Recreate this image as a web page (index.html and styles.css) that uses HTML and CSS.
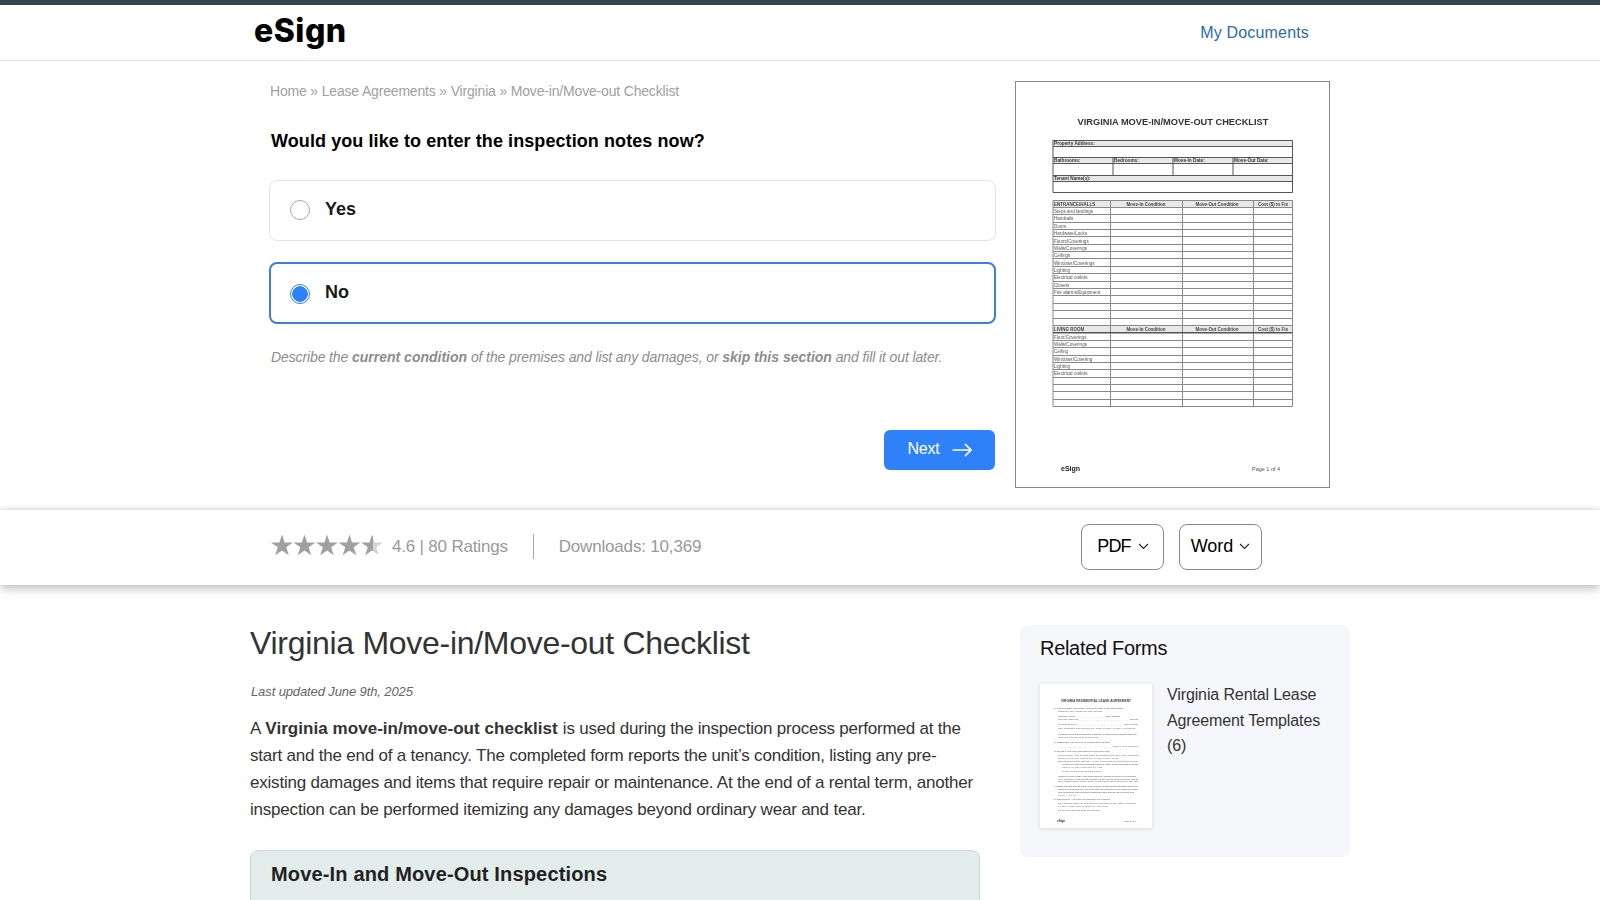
FILE: index.html
```html
<!DOCTYPE html>
<html lang="en">
<head>
<meta charset="utf-8">
<title>Virginia Move-in/Move-out Checklist</title>
<link rel="stylesheet" href="styles.css">
</head>
<body>
<div class="topbar"></div>
<header class="site-header">
  <div class="wrap header-row">
    <a class="logo">eSign</a>
    <a class="nav-link">My Documents</a>
  </div>
</header>
<section class="wizard wrap">
  <div class="wizard-form">
    <div class="crumbs">Home » Lease Agreements » Virginia » Move-in/Move-out Checklist</div>
    <h2 class="question">Would you like to enter the inspection notes now?</h2>
    <label class="option"><span class="radio"></span><span class="opt-label">Yes</span></label>
    <label class="option selected"><span class="radio on"></span><span class="opt-label">No</span></label>
    <p class="hint">Describe the <b>current condition</b> of the premises and list any damages, or <b>skip this section</b> and fill it out later.</p>
    <div class="next-row">
      <a class="next"><span class="next-text">Next</span>
        <svg class="arrow" width="20" height="14" viewBox="0 0 20 14"><path d="M0.5 7H19M13 1l6 6-6 6" fill="none" stroke="#fff" stroke-width="1.6"/></svg>
      </a>
    </div>
  </div>
  <div class="doc">
    <svg class="doc-svg" width="313" height="405" viewBox="1016 82 313 405">
      <g fill="#333" font-family="Liberation Sans, Arial, sans-serif">
        <text x="1173" y="125" text-anchor="middle" font-size="9.25" font-weight="700">VIRGINIA MOVE-IN/MOVE-OUT CHECKLIST</text>
        <path fill="#e8e8e8" d="M1053 140h240v6h-240zM1053 158h240v5.500h-240zM1053 175.500h240v5.500h-240zM1053 200h240v7.500h-240zM1053 325.500h240v7h-240z"/>
        <path fill="none" stroke="#555" stroke-width="1" d="M1053 140.500H1292.500V192.500H1053ZM1053 146.500H1292.500M1053 157.500H1292.500M1053 163.500H1292.500M1053 175.500H1292.500M1053 181.500H1292.500M1113 157.500V175.500M1173 157.500V175.500M1233 157.500V175.500"/>
        <path fill="none" stroke="#888" stroke-width="1" d="M1053 200.500H1292.500V406.500H1053ZM1110.500 200V406.500M1182.500 200V406.500M1253.500 200V406.500M1053 207.500H1292.500M1053 214.500H1292.500M1053 222.500H1292.500M1053 229.500H1292.500M1053 236.500H1292.500M1053 244.500H1292.500M1053 251.500H1292.500M1053 258.500H1292.500M1053 266.500H1292.500M1053 273.500H1292.500M1053 281.500H1292.500M1053 288.500H1292.500M1053 295.500H1292.500M1053 303.500H1292.500M1053 310.500H1292.500M1053 318.500H1292.500M1053 325.500H1292.500M1053 340.500H1292.500M1053 347.500H1292.500M1053 355.500H1292.500M1053 362.500H1292.500M1053 369.500H1292.500M1053 377.500H1292.500M1053 384.500H1292.500M1053 391.500H1292.500M1053 399.500H1292.500"/>
        <path fill="none" stroke="#555" stroke-width="1.500" d="M1053 332.800H1292.500"/>
        <g font-size="4.700" font-weight="700">
          <text x="1054" y="145">Property Address:</text>
          <text x="1054" y="162">Bathrooms:</text>
          <text x="1114" y="162">Bedrooms:</text>
          <text x="1174" y="162">Move-In Date:</text>
          <text x="1234" y="162">Move-Out Date:</text>
          <text x="1054" y="180">Tenant Name(s):</text>
        </g>
        <g font-size="4.500" font-weight="700" fill="#444">
          <text x="1054" y="206">ENTRANCE/HALLS</text>
          <text x="1146" y="206" text-anchor="middle">Move-In Condition</text>
          <text x="1217" y="206" text-anchor="middle">Move-Out Condition</text>
          <text x="1273" y="206" text-anchor="middle">Cost ($) to Fix</text>
          <text x="1054" y="331">LIVING ROOM</text>
          <text x="1146" y="331" text-anchor="middle">Move-In Condition</text>
          <text x="1217" y="331" text-anchor="middle">Move-Out Condition</text>
          <text x="1273" y="331" text-anchor="middle">Cost ($) to Fix</text>
        </g>
        <g font-size="4.600" fill="#555">
          <text x="1054" y="213">Steps and landings</text>
          <text x="1054" y="220">Handrails</text>
          <text x="1054" y="228">Doors</text>
          <text x="1054" y="235">Hardware/Locks</text>
          <text x="1054" y="243">Floors/Coverings</text>
          <text x="1054" y="250">Walls/Coverings</text>
          <text x="1054" y="257">Ceilings</text>
          <text x="1054" y="265">Windows/Coverings</text>
          <text x="1054" y="272">Lighting</text>
          <text x="1054" y="279">Electrical outlets</text>
          <text x="1054" y="287">Closets</text>
          <text x="1054" y="294">Fire alarms/Equipment</text>
          <text x="1054" y="339">Floor/Coverings</text>
          <text x="1054" y="346">Walls/Coverings</text>
          <text x="1054" y="353">Ceiling</text>
          <text x="1054" y="361">Windows/Covering</text>
          <text x="1054" y="368">Lighting</text>
          <text x="1054" y="375">Electrical outlets</text>
        </g>
        <text x="1061" y="471" font-size="7" font-weight="700" fill="#222">eSign</text>
        <text x="1252" y="471" font-size="5.500" fill="#555">Page 1 of 4</text>
      </g>
    </svg>
  </div>
</section>
<section class="rating-bar">
  <div class="wrap rating-row">
    <div class="rating-info">
      <svg class="stars" width="112" height="22" viewBox="0 0 112 22">
        <defs>
          <path id="star" d="M11 .5L13.600 8.440 21.900 8.450 15.200 13.360 17.800 21.300 11 16.400 4.200 21.300 6.800 13.360 .06 8.450 8.400 8.440Z"/>
          <linearGradient id="part"><stop offset=".55" stop-color="#a0a0a0"/><stop offset=".55" stop-color="#d4d4d4"/></linearGradient>
        </defs>
        <use href="#star" x="1" fill="#a0a0a0"/>
        <use href="#star" x="23.500" fill="#a0a0a0"/>
        <use href="#star" x="46" fill="#a0a0a0"/>
        <use href="#star" x="68.500" fill="#a0a0a0"/>
        <use href="#star" x="91" fill="url(#part)"/>
      </svg>
      <span class="score">4.6 | 80 Ratings</span>
      <span class="divider"></span>
      <span class="downloads">Downloads: 10,369</span>
    </div>
    <a class="dl-btn"><span class="dl-pdf">PDF</span> <svg width="11" height="7" viewBox="0 0 11 7"><path d="M1 1l4.500 4.500L10 1" fill="none" stroke="#222" stroke-width="1.100"/></svg></a>
    <a class="dl-btn">Word <svg width="11" height="7" viewBox="0 0 11 7"><path d="M1 1l4.500 4.500L10 1" fill="none" stroke="#222" stroke-width="1.100"/></svg></a>
  </div>
</section>
<main class="wrap content">
  <article class="article">
    <h1 class="title">Virginia Move-in/Move-out Checklist</h1>
    <div class="updated">Last updated June 9th, 2025</div>
    <p class="intro">A <b>Virginia move-in/move-out checklist</b> is used during the inspection process performed at the start and the end of a tenancy. The completed form reports the unit’s condition, listing any pre-existing damages and items that require repair or maintenance. At the end of a rental term, another inspection can be performed itemizing any damages beyond ordinary wear and tear.</p>
    <div class="toc"><h3 class="toc-title">Move-In and Move-Out Inspections</h3></div>
  </article>
  <aside class="related">
    <h4 class="related-title">Related Forms</h4>
    <div class="related-item">
      <div class="thumb">
        <svg width="112" height="144" viewBox="0 0 112 144">
          <g font-family="Liberation Sans, Arial, sans-serif" fill="#555" font-size="2.500">
            <text x="21" y="18" textLength="70" font-size="3.300" font-weight="700" fill="#444">VIRGINIA RESIDENTIAL LEASE AGREEMENT</text>
            <text x="14" y="25" textLength="69">1. THE PARTIES. This Lease Agreement made on the date written</text>
            <text x="18" y="28" textLength="44">between the Landlord and Tenant</text>
            <text x="18" y="33" textLength="62">Landlord Name ____________________ with address</text>
            <text x="18" y="36" textLength="80">mailing address ________________________________ Tenant</text>
            <text x="18" y="41" textLength="80">Tenant Name(s) _____________________________ with Tenant</text>
            <text x="18" y="45" textLength="78">The Landlord and Tenant are each a party to this Agreement.</text>
            <text x="18" y="51" textLength="79">WHEREAS the Tenant agrees to lease the Premises from Landlord under the</text>
            <text x="18" y="54" textLength="40">following terms and conditions</text>
            <text x="14" y="59" textLength="56">2. PREMISES. The property is located at the address</text>
            <text x="18" y="63" textLength="80">________________________________ with a unit number</text>
            <text x="14" y="68" textLength="56">3. LEASE TYPE. The lease shall be a fixed term lease</text>
            <text x="18" y="72" textLength="80">Fixed Lease. The Tenant shall be allowed to occupy the premises</text>
            <text x="18" y="75" textLength="60">starting on the first date of the lease term</text>
            <text x="18" y="77.500" textLength="80">and ending on the last day. At the end of the term the Tenant may</text>
            <text x="22" y="81" textLength="76">continue to lease the premises under the same terms as month to month</text>
            <text x="22" y="84" textLength="40">notice is not required by law</text>
            <text x="22" y="88" textLength="40">Lease ends with written notice</text>
            <text x="18" y="93" textLength="78">Month-to-Month Lease. The Tenant shall be allowed to occupy the premises</text>
            <text x="18" y="95.500" textLength="80">on a month to month basis starting on the first of each calendar month</text>
            <text x="18" y="98" textLength="80">and ending when either party gives notice as required by the law</text>
            <text x="14" y="103" textLength="84">4. RENT. The rent amount is due on the first day of each month during the lease term</text>
            <text x="18" y="105.500" textLength="80">and the Tenant shall pay the amount to the Landlord by the agreed method</text>
            <text x="18" y="109" textLength="76">The rent shall be paid in advance without demand and any late payment fees</text>
            <text x="18" y="111.500" textLength="20">shall apply</text>
            <text x="14" y="116" textLength="56">5. DEPOSITS. A security deposit shall be required</text>
            <text x="18" y="120" textLength="78">The Tenant shall pay the security deposit on the date of signing</text>
            <text x="18" y="123" textLength="50">of this lease and it shall be returned</text>
            <text x="18" y="127" textLength="42">No security deposit shall be required</text>
            <text x="17" y="138" font-size="3" font-weight="700" fill="#333">eSign</text>
            <text x="84" y="138" font-size="2.400">Page 1 of 6</text>
          </g>
        </svg>
      </div>
      <a class="related-link">Virginia Rental Lease Agreement Templates (6)</a>
    </div>
  </aside>
</main>
</body>
</html>
```
FILE: styles.css
```css
* { box-sizing: border-box; }
body {
  margin: 0;
  height: 100vh;
  overflow: hidden;
  font-family: "Liberation Sans", Arial, sans-serif;
  background: #fff;
  color: #333;
}
.wrap { width: 1100px; margin: 0 auto; }
.topbar { height: 5px; background: #37474f; }
.site-header { height: 56px; border-bottom: 1px solid #e8e8e8; }
.header-row { display: flex; align-items: center; justify-content: space-between; height: 55px; padding: 0 41px 0 4px; }
.logo { font-family: Inter, sans-serif; font-weight: 800; font-size: 32px; line-height: 50px; margin-top: -4px; color: #000; letter-spacing: 0.5px; }
.nav-link { font-size: 16px; color: #2b6ca8; letter-spacing: 0.17px; }

.wizard { display: flex; padding: 20px 0 22px 19px; }
.wizard-form { width: 727px; margin-right: 19px; }
.crumbs { height: 20px; line-height: 20px; font-size: 14px; color: #a0a0a0; padding-left: 1px; letter-spacing: -0.175px; }
.question { margin: 28px 0 27px; padding-left: 2px; font-size: 18px; line-height: 24px; font-weight: 700; color: #000; letter-spacing: 0.085px; }
.option { display: flex; align-items: center; gap: 15px; height: 61px; padding-left: 20px; border: 1px solid #e4e4e4; border-radius: 8px; margin-bottom: 21px; }
.option.selected { height: 62px; border: 2px solid #3f7fd0; padding-left: 19px; margin-bottom: 23px; }
.radio { width: 20px; height: 20px; margin-top: -2px; border: 1px solid #aaa; border-radius: 50%; background: #fff; }
.radio.on { margin-top: 2px; border-color: #2f81f7; background: radial-gradient(circle, #2f81f7 0 7.500px, #fff 8px); }
.opt-label { font-size: 18px; font-weight: 700; color: #1a1a1a; margin-top: -2px; }
.hint { margin: 0; height: 20px; padding-left: 2px; font-size: 14px; line-height: 20px; font-style: italic; color: #8c8c8c; white-space: nowrap; letter-spacing: -0.115px; }
.hint b { letter-spacing: 0; }
.next-row { display: flex; justify-content: flex-end; margin: 63px 1px 0 0; }
.next { display: flex; align-items: center; justify-content: center; gap: 12px; width: 111px; height: 40px; background: #2f81f7; border-radius: 6px; color: #fff; font-size: 16px; }
.next-text { margin-top: -2px; letter-spacing: -0.2px; }
.doc { width: 315px; height: 407px; border: 1px solid #888; background: #fff; }
.doc-svg { display: block; filter: blur(0.5px); }

.rating-bar { height: 75px; background: #fff; box-shadow: 0 3px 10px rgba(0,0,0,.28), 0 -1px 4px rgba(0,0,0,.06); position: relative; }
.rating-row { display: flex; align-items: center; height: 75px; padding: 0 0 2px 20px; }
.rating-info { display: flex; align-items: center; width: 811px; color: #999; font-size: 17px; }
.stars { display: block; margin-top: -3px; }
.score { margin-left: 10px; letter-spacing: -0.19px; }
.downloads { letter-spacing: -0.18px; }
.divider { width: 1px; height: 25px; background: #aaa; margin: 0 25px; }
.dl-btn { display: flex; align-items: center; justify-content: center; gap: 6px; height: 46px; width: 83px; margin-right: 15px; border: 1px solid #888; border-radius: 8px; background: #fff; font-size: 18px; color: #000; }
.dl-pdf { letter-spacing: -0.9px; margin-right: 1px; margin-left: 1px; }

.content { display: flex; justify-content: space-between; align-items: flex-start; padding-top: 38px; }
.article { width: 730px; }
.title { margin: 0; font-size: 32px; line-height: 40px; font-weight: 400; color: #333; letter-spacing: -0.29px; }
.updated { margin-top: 20px; height: 18px; line-height: 18px; font-size: 13px; font-style: italic; color: #666; letter-spacing: -0.11px; padding-left: 1px; }
.intro { margin: 14px 0 27px; font-size: 17px; line-height: 27px; color: #333; letter-spacing: -0.21px; }
.intro b { letter-spacing: 0.05px; margin: 0 0.6px; }
.toc { height: 120px; background: #e2ecea; border: 1px solid #ccdada; border-radius: 8px; padding: 8px 20px; }
.toc-title { margin: 0; font-size: 20px; line-height: 30px; font-weight: 700; color: #222; letter-spacing: 0.16px; }

.related { width: 330px; height: 232px; margin-top: 2px; padding: 12px 20px; background: #f6f7fb; border-radius: 8px; }
.related-title { margin: 0 0 24px; font-size: 20px; line-height: 23px; font-weight: 400; color: #111; letter-spacing: -0.31px; }
.related-item { display: flex; gap: 15px; }
.thumb { flex: none; width: 112px; height: 144px; background: #fff; box-shadow: 0 1px 4px rgba(0,0,0,.12); }
.thumb svg { display: block; filter: blur(0.25px); }
.related-link { font-size: 16px; line-height: 25.500px; color: #333; margin-top: -2px; letter-spacing: -0.12px; }
```
